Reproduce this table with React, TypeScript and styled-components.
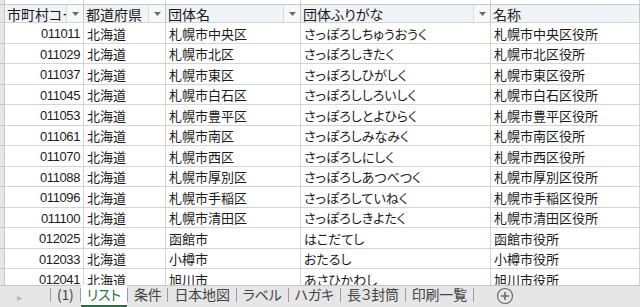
import styled, { createGlobalStyle } from 'styled-components';

const GlobalStyle = createGlobalStyle`
  html, body {
    margin: 0;
    padding: 0;
    background: #ffffff;
    overflow: hidden;
  }

  body {
    font-family: "Noto Sans CJK JP", "Noto Sans", sans-serif;
    font-feature-settings: "palt";
    color: #1a1a1a;
  }
`;

const COLUMNS = '5px 79px 82px 135px 190px 1fr';

const columnLetters = ['A', 'B', 'C', 'D', 'E'];

const headers = ['市町村コード', '都道府県', '団体名', '団体ふりがな', '名称'];

const rows: string[][] = [
  ['011011', '北海道', '札幌市中央区', 'さっぽろしちゅうおうく', '札幌市中央区役所'],
  ['011029', '北海道', '札幌市北区', 'さっぽろしきたく', '札幌市北区役所'],
  ['011037', '北海道', '札幌市東区', 'さっぽろしひがしく', '札幌市東区役所'],
  ['011045', '北海道', '札幌市白石区', 'さっぽろししろいしく', '札幌市白石区役所'],
  ['011053', '北海道', '札幌市豊平区', 'さっぽろしとよひらく', '札幌市豊平区役所'],
  ['011061', '北海道', '札幌市南区', 'さっぽろしみなみく', '札幌市南区役所'],
  ['011070', '北海道', '札幌市西区', 'さっぽろしにしく', '札幌市西区役所'],
  ['011088', '北海道', '札幌市厚別区', 'さっぽろしあつべつく', '札幌市厚別区役所'],
  ['011096', '北海道', '札幌市手稲区', 'さっぽろしていねく', '札幌市手稲区役所'],
  ['011100', '北海道', '札幌市清田区', 'さっぽろしきよたく', '札幌市清田区役所'],
  ['012025', '北海道', '函館市', 'はこだてし', '函館市役所'],
  ['012033', '北海道', '小樽市', 'おたるし', '小樽市役所'],
  ['012041', '北海道', '旭川市', 'あさひかわし', '旭川市役所'],
];

const sheets = ['(1)', 'リスト', '条件', '日本地図', 'ラベル', 'ハガキ', '長３封筒', '印刷一覧'];
const ACTIVE_SHEET = 'リスト';

function FilterArrow() {
  return (
    <svg width="7" height="4" viewBox="0 0 7 4">
      <path d="M0 0h7L3.5 4z" fill="#6b6b6b" />
    </svg>
  );
}

function PlusCircle() {
  return (
    <svg width="18" height="18" viewBox="0 0 18 18">
      <circle cx="9" cy="9" r="7.5" fill="none" stroke="#6a6a6a" strokeWidth="1.2" />
      <path d="M9 5v8M5 9h8" stroke="#6a6a6a" strokeWidth="1.6" />
    </svg>
  );
}

export default function App() {
  return (
    <>
      <GlobalStyle />
      <Workbook>
        <GridArea>
          <LetterRow>
            <CornerCell />
            {columnLetters.map(l => (
              <LetterCell key={l}>{l}</LetterCell>
            ))}
          </LetterRow>

          <Row $height={18}>
            <RowHead />
            {headers.map((h, i) => (
              <HeaderCell key={h}>
                <HeaderText>{h}</HeaderText>
                {i < 4 && (
                  <FilterButton>
                    <FilterArrow />
                  </FilterButton>
                )}
              </HeaderCell>
            ))}
          </Row>

          {rows.map((r, idx) => (
            <Row key={r[0]} $height={idx % 2 === 0 ? 21 : 20}>
              <RowHead />
              <CodeCell>{r[0]}</CodeCell>
              <Cell>{r[1]}</Cell>
              <Cell>{r[2]}</Cell>
              <Cell>{r[3]}</Cell>
              <Cell>{r[4]}</Cell>
            </Row>
          ))}
        </GridArea>

        <TabBar>
          <NavArrow>▸</NavArrow>
          <TabDivider />
          {sheets.map(name => (
            <TabGroup key={name}>
              <SheetTab $active={name === ACTIVE_SHEET}>{name}</SheetTab>
              <TabDivider />
            </TabGroup>
          ))}
          <AddSheet>
            <PlusCircle />
          </AddSheet>
        </TabBar>
      </Workbook>
    </>
  );
}

const Workbook = styled.div`
  width: 640px;
  height: 307px;
  display: flex;
  flex-direction: column;
  overflow: hidden;
`;

const GridArea = styled.div`
  flex: 1;
  min-height: 0;
  overflow: hidden;
  display: flex;
  flex-direction: column;
`;

/* column letters are scrolled almost out of view, only their feet show */
const LetterRow = styled.div`
  flex: none;
  display: grid;
  grid-template-columns: ${COLUMNS};
  height: 20px;
  margin-top: -15px;
  background: #ffffff;
  border-bottom: 1px solid #c8c8c8;
  box-sizing: border-box;
`;

const CornerCell = styled.div`
  background: #e6e6e6;
  border-right: 1px solid #c8c8c8;
`;

const LetterCell = styled.div`
  display: flex;
  align-items: center;
  justify-content: center;
  border-right: 1px solid #d4d4d4;
  font-family: "Liberation Sans", sans-serif;
  font-size: 14px;
  color: #444444;
`;

const Row = styled.div<{ $height: number }>`
  flex: none;
  display: grid;
  grid-template-columns: ${COLUMNS};
  height: ${p => p.$height}px;
  box-sizing: border-box;
  border-bottom: 1px solid #d4d4d4;
`;

const RowHead = styled.div`
  background: #e6e6e6;
  border-right: 1px solid #c8c8c8;
  margin-bottom: -1px;
  border-bottom: 1px solid #c8c8c8;
`;

const HeaderCell = styled.div`
  position: relative;
  display: flex;
  align-items: center;
  min-width: 0;
  background: #f0f4f8;
  border-right: 1px solid #c6c6c6;
  overflow: hidden;
`;

const HeaderText = styled.span`
  padding-left: 2px;
  font-size: 14px;
  white-space: nowrap;
  overflow: hidden;
`;

const FilterButton = styled.div`
  position: absolute;
  top: 0;
  right: 0;
  bottom: 0;
  width: 16px;
  display: flex;
  align-items: center;
  justify-content: center;
  background: #f6f7f9;
  border-left: 1px solid #dcdcdc;
`;

const Cell = styled.div`
  display: flex;
  align-items: center;
  padding-left: 3px;
  min-width: 0;
  border-right: 1px solid #d4d4d4;
  font-size: 13px;
  white-space: nowrap;
  overflow: hidden;
`;

const CodeCell = styled(Cell)`
  justify-content: flex-end;
  padding: 1px 3px 0 0;
  font-family: "Liberation Sans", sans-serif;
  font-size: 13px;
  letter-spacing: -0.4px;
`;

const TabBar = styled.div`
  flex: none;
  height: 22px;
  display: flex;
  align-items: stretch;
  background: #e6e6e6;
  border-top: 1px solid #c6c6c6;
  box-sizing: border-box;
`;

const NavArrow = styled.div`
  width: 50px;
  display: flex;
  align-items: center;
  padding-left: 17px;
  box-sizing: border-box;
  font-size: 10px;
  color: #b5b5b5;
`;

const TabGroup = styled.div`
  display: flex;
  align-items: stretch;
`;

const TabDivider = styled.div`
  width: 1px;
  margin: 2px 0 5px;
  background: #9c9c9c;
`;

const SheetTab = styled.div<{ $active: boolean }>`
  display: flex;
  align-items: center;
  padding: 0 6px 2px;
  margin-top: -1px;
  font-size: 14px;
  letter-spacing: -0.2px;
  color: ${p => (p.$active ? '#217346' : '#444444')};
  background: ${p => (p.$active ? '#ffffff' : 'transparent')};
  border-bottom: 2px solid ${p => (p.$active ? '#217346' : 'transparent')};
`;

const AddSheet = styled.div`
  display: flex;
  align-items: center;
  margin-left: 22px;
  padding-bottom: 2px;
`;
